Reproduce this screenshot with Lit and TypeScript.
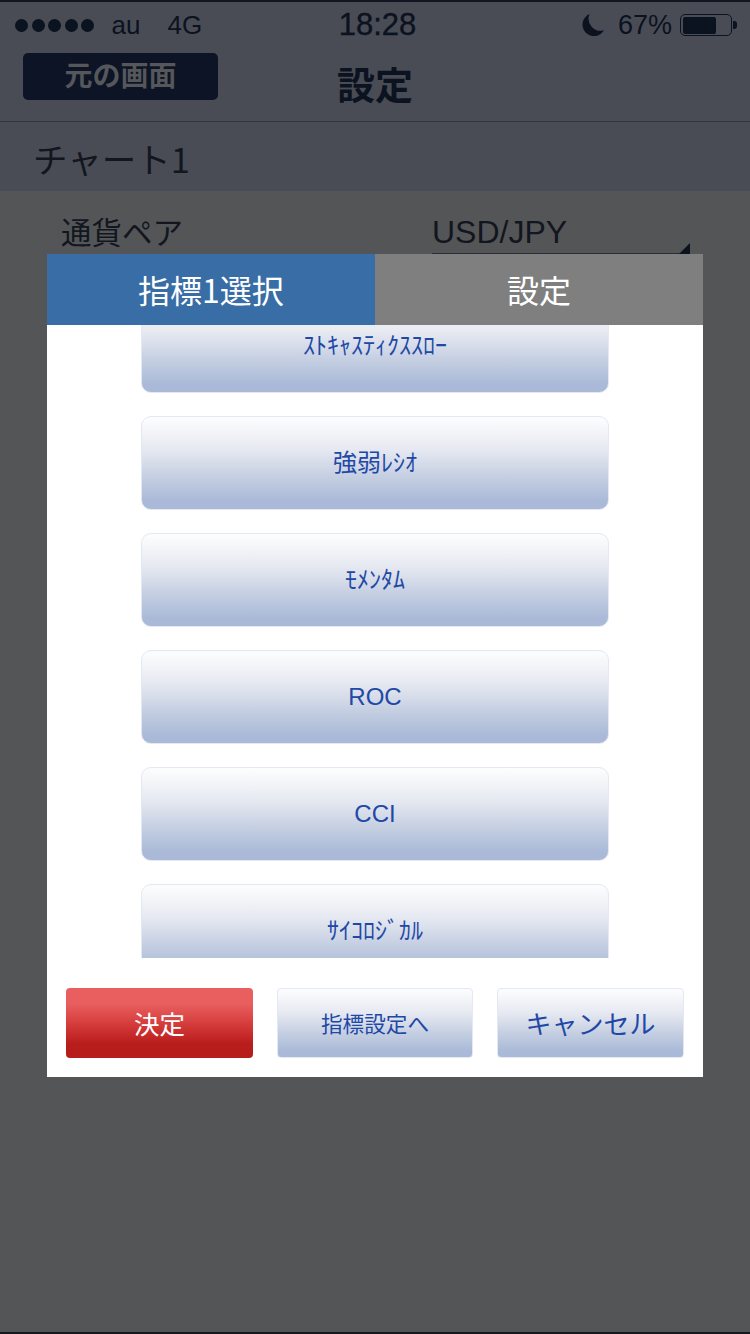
import { LitElement, html, css } from "lit";
import { customElement } from "lit/decorators.js";

const ITEMS = ["ｽﾄｷｬｽﾃｨｸｽｽﾛｰ", "強弱ﾚｼｵ", "ﾓﾒﾝﾀﾑ", "ROC", "CCI", "ｻｲｺﾛｼﾞｶﾙ"];

@customElement("app-root")
export class AppRoot extends LitElement {
  static styles = css`
    :host {
      display: block;
      position: relative;
      width: 750px;
      height: 1334px;
      overflow: hidden;
      background: #545557;
      color: #0b1220;
      font-family: "Liberation Sans", "Noto Sans CJK JP", sans-serif;
    }
    .top { background: #494c55; border-top: 2px solid #10151f; }
    .status {
      height: 44px;
      display: grid;
      grid-template-columns: 1fr auto 1fr;
      align-items: center;
      padding: 2px 13px 0 15px;
      box-sizing: border-box;
      font-size: 26px;
    }
    .left { display: flex; align-items: center; gap: 4px; }
    .dot { width: 13px; height: 13px; border-radius: 50%; background: #0b1220; margin-right: -0.5px; }
    .carrier { margin-left: 14px; width: 42px; }
    .net { margin-left: 10px; }
    .time { font-size: 31px; -webkit-text-stroke: 0.4px #0b1220; margin-right: -3px; }
    .right { display: flex; justify-content: flex-end; align-items: center; }
    .moon { margin-right: 14px; }
    .pct { font-size: 27px; margin-right: 8px; }
    .batt { display: flex; align-items: center; gap: 1px; }
    .shell { width: 52px; height: 22px; border: 1.5px solid #0b1220; border-radius: 5px; padding: 1.5px; box-sizing: border-box; }
    .fill { height: 100%; width: 72%; background: #0b1220; border-radius: 2px; }
    .nub { width: 4px; height: 8px; background: #0b1220; border-radius: 0 3px 3px 0; }
    .nav {
      height: 76px;
      display: grid;
      grid-template-columns: 1fr auto 1fr;
      align-items: center;
      border-bottom: 1px solid #33363b;
      box-sizing: border-box;
    }
    .back {
      width: 195px; height: 47px; margin: -15px 0 0 23px; padding-bottom: 4px; box-sizing: border-box;
      background: #0c1426; border-radius: 5px;
      display: flex; align-items: center; justify-content: center;
      color: #55575b; font-size: 28px; font-weight: 700;
      font-family: "Noto Sans CJK JP", sans-serif;
    }
    .title { font-size: 38px; font-weight: 700; font-family: "Noto Sans CJK JP", sans-serif; margin-top: -2px; }
    .band { height: 69px; display: flex; align-items: center; padding: 2px 0 0 33px; box-sizing: border-box; font-size: 34.5px; color: #12161f; font-family: "Noto Sans CJK JP", sans-serif; font-weight: 400; }
    .row { display: grid; grid-template-columns: 371px 248px; padding: 19px 0 0 61px; font-size: 30.5px; color: #12161f; font-family: "Noto Sans CJK JP", sans-serif; font-weight: 400; line-height: 43px; }
    .pair { font-family: "Liberation Sans", sans-serif; font-size: 32px; line-height: 41px; padding-top: 2px; border-bottom: 1px solid #2a2e36; }
    .tri { position: absolute; left: 679px; top: 243px; width: 0; height: 0; border-left: 11px solid transparent; border-bottom: 11px solid #0b1220; }

    .modal {
      position: absolute; left: 47px; top: 254px; width: 656px; height: 823px;
      background: #fff; display: flex; flex-direction: column;
    }
    .tabs { display: grid; grid-template-columns: 328px 328px; height: 71px; }
    .tab { display: flex; align-items: center; justify-content: center; padding-bottom: 2px; color: #fff; font-size: 32px; font-family: "Noto Sans CJK JP", sans-serif; font-weight: 400; }
    .tab.on { background: #386da5; }
    .tab.off { background: #7f7f7f; }
    .list { height: 633px; overflow: hidden; }
    .items { display: flex; flex-direction: column; align-items: center; gap: 23px; margin-top: -26px; }
    .btn {
      width: 468px; height: 94px; box-sizing: border-box; flex: none;
      border: 1px solid #e4e8f2; border-radius: 10px; padding-bottom: 5px;
      background: linear-gradient(#fbfcfd 3%, #e6e9f1 35%, #c5cfe2 65%, #a9b9d7 92%);
      display: flex; align-items: center; justify-content: center;
      color: #2248a6; font-size: 24px;
      font-family: "Liberation Sans", "Noto Sans CJK JP", sans-serif;
    }
    .foot { flex: 1; display: flex; gap: 24px; padding: 30px 19px 19px; box-sizing: border-box; }
    .fb {
      height: 70px; border-radius: 4px; box-sizing: border-box; padding-bottom: 2px;
      display: flex; align-items: center; justify-content: center;
      font-family: "Noto Sans CJK JP", sans-serif;
      color: #2248a6; border: 1px solid #e4e8f2;
      background: linear-gradient(#fbfcfd 3%, #e6e9f1 35%, #c5cfe2 65%, #a9b9d7 92%);
    }
    .ok {
      width: 187px; color: #fff; font-size: 25.5px; border: none;
      background: linear-gradient(#e95f5f 22%, #da4444 45%, #c92c2c 65%, #b71d1a 80%);
    }
    .mid { width: 196px; font-size: 21.6px; }
    .cancel { width: 187px; font-size: 26px; }
    .bottom { position: absolute; left: 0; right: 0; bottom: 0; height: 2px; background: #14181f; }
    .btn.latin { padding-bottom: 0; }
  `;

  render() {
    return html`
      <div class="top">
        <div class="status">
          <div class="left">
            ${[0, 1, 2, 3, 4].map(() => html`<i class="dot"></i>`)}
            <span class="carrier">au</span><span class="net">4G</span>
          </div>
          <div class="time">18:28</div>
          <div class="right">
            <svg class="moon" width="23" height="22" viewBox="0 0 24 23"><path d="M9 0 A12 12 0 1 0 24 17 A12.5 12.5 0 0 1 9 0 Z" fill="#0b1220"/></svg>
            <span class="pct">67%</span>
            <div class="batt"><div class="shell"><div class="fill"></div></div><i class="nub"></i></div>
          </div>
        </div>
        <div class="nav">
          <div class="back">元の画面</div>
          <div class="title">設定</div>
          <div></div>
        </div>
        <div class="band">チャート1</div>
      </div>
      <div class="row"><span>通貨ペア</span><span class="pair">USD/JPY</span></div>
      <i class="tri"></i>
      <div class="modal">
        <div class="tabs">
          <div class="tab on">指標1選択</div>
          <div class="tab off">設定</div>
        </div>
        <div class="list">
          <div class="items">
            ${ITEMS.map((t) => html`<div class="btn ${/^[A-Z]+$/.test(t) ? "latin" : ""}">${t}</div>`)}
          </div>
        </div>
        <div class="foot">
          <div class="fb ok">決定</div>
          <div class="fb mid">指標設定へ</div>
          <div class="fb cancel">キャンセル</div>
        </div>
      </div>
      <div class="bottom"></div>
    `;
  }
}
